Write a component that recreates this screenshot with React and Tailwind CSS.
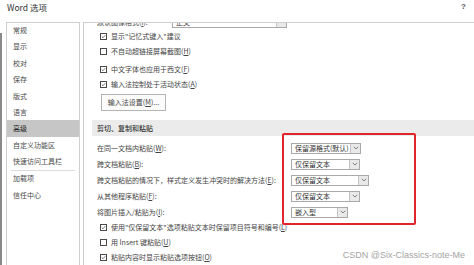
import React from "react";

const FONT = { fontFamily: '"Noto Sans CJK SC", "Noto Sans", sans-serif' };

function Key({ k }) {
  return (
    <>
      (<span className="underline">{k}</span>)
    </>
  );
}

function CheckBox({ checked }) {
  return (
    <span className="w-[7px] h-[7px] border border-[#4a4a4a] bg-white flex items-center justify-center shrink-0">
      {checked ? (
        <svg width="7" height="7" viewBox="0 0 7 7">
          <path d="M1 3.6 L2.8 5.2 L6 1.6" fill="none" stroke="#333" strokeWidth="0.9" />
        </svg>
      ) : null}
    </span>
  );
}

function CheckRow({ checked, children, h = "h-[15px]", extra = "" }) {
  return (
    <div className={`${h} ${extra} flex items-center pl-[16px] gap-[4px] text-[7px] text-[#444] whitespace-nowrap`}>
      <CheckBox checked={checked} />
      <span>{children}</span>
    </div>
  );
}

function Select({ value, w }) {
  return (
    <div className={`${w} h-[11px] border border-[#a9a9a9] bg-white flex items-stretch`}>
      <div className="flex-1 flex items-center pl-[3px] text-[7px] text-[#333] whitespace-nowrap overflow-hidden">
        {value}
      </div>
      <div className="w-[10px] border-l border-[#c4c4c4] bg-[#e9e9e9] flex items-center justify-center">
        <svg width="6" height="4" viewBox="0 0 6 4">
          <path d="M0.8 0.8 L3 3 L5.2 0.8" fill="none" stroke="#666" strokeWidth="0.8" />
        </svg>
      </div>
    </div>
  );
}

function PasteRow({ label, value, w }) {
  return (
    <div className="h-[16px] flex items-center pl-[13px] text-[7px] text-[#444] whitespace-nowrap">
      <div className="w-[194px] overflow-hidden">{label}</div>
      {value ? <Select value={value} w={w} /> : null}
    </div>
  );
}

const NAV = ["常规", "显示", "校对", "保存", "版式", "语言", "高级", "自定义功能区", "快速访问工具栏"];

export default function App() {
  return (
    <div className="relative w-[474px] h-[265px] overflow-hidden bg-white flex" style={FONT}>
      <div className="w-[2px] mt-[33px] bg-[#8a8a8a]" />
      <div className="flex-1 flex flex-col">
        <div className="h-[22px] flex items-start justify-between pl-[5px] pr-[8px] pt-[1px]">
          <span className="text-[8.5px] leading-[12px] text-[#333]">Word 选项</span>
          <span className="text-[8px] leading-[12px] text-[#555] font-bold" style={{ fontFamily: '"Liberation Sans", sans-serif' }}>?</span>
        </div>
        <div className="flex-1 flex pl-[4px] gap-[3px] min-h-0">
          <nav className="w-[74px] border-l border-t border-r border-[#cfcfcf] flex flex-col">
            <div className="-mt-[1px]">
              {NAV.map((n) => (
                <div
                  key={n}
                  className={`h-[16.4px] flex items-center pl-[6px] text-[7px] ${n === "高级" ? "bg-[#c6c6c6] text-[#222]" : "text-[#4a4a4a]"}`}
                >
                  {n}
                </div>
              ))}
              <div className="h-px bg-[#dcdcdc] mx-[4px]" />
              {["加载项", "信任中心"].map((n) => (
                <div key={n} className="h-[16.4px] flex items-center pl-[6px] text-[7px] text-[#4a4a4a]">
                  {n}
                </div>
              ))}
            </div>
          </nav>
          <section className="flex-1 border-l border-t border-[#cfcfcf] overflow-hidden flex flex-col">
            <div className="-mt-[8px] h-[14px] flex items-center pl-[13px] text-[7px] text-[#444] whitespace-nowrap">
              <span className="w-[75px]">默认图像格式(<span className="underline">I</span>):</span>
              <div className="w-[115px] h-[12px] border border-[#a9a9a9] flex">
                <span className="flex-1 pl-[3px] flex items-center">正文</span>
                <span className="w-[10px] border-l border-[#c4c4c4] bg-[#e9e9e9]" />
              </div>
            </div>
            <CheckRow checked>显示"记忆式键入"建议</CheckRow>
            <CheckRow>不自动超链接屏幕截图<Key k="H" /></CheckRow>
            <CheckRow checked extra="mt-[3px]">中文字体也应用于西文<Key k="F" /></CheckRow>
            <CheckRow checked>输入法控制处于活动状态<Key k="A" /></CheckRow>
            <div className="mt-[2px] pl-[17px]">
              <div className="w-[65px] h-[17px] border border-[#b4b4b4] bg-[#fbfbfb] flex items-center justify-center text-[7px] text-[#444]">
                输入法设置<Key k="M" />...
              </div>
            </div>
            <div className="mt-[9px] ml-[8px] h-[16px] bg-[#ebebeb] flex items-center pl-[5px] text-[7px] font-medium text-[#333]">
              剪切、复制和粘贴
            </div>
            <div className="mt-[4px]">
              <PasteRow label={<>在同一文档内粘贴<Key k="W" />:</>} value="保留源格式(默认)" w="w-[70px]" />
              <PasteRow label={<>跨文档粘贴<Key k="B" />:</>} value="仅保留文本" w="w-[69px]" />
              <PasteRow label={<>跨文档粘贴的情况下，样式定义发生冲突时的解决方法<Key k="E" />:</>} value="仅保留文本" w="w-[78px]" />
              <PasteRow label={<>从其他程序粘贴<Key k="F" />:</>} value="仅保留文本" w="w-[69px]" />
              <PasteRow label={<>将图片插入/粘贴为<Key k="I" />:</>} value="嵌入型" w="w-[57px]" />
            </div>
            <CheckRow checked>使用"仅保留文本"选项粘贴文本时保留项目符号和编号<Key k="L" /></CheckRow>
            <CheckRow>用 Insert 键粘贴<Key k="U" /></CheckRow>
            <CheckRow checked>粘贴内容时显示粘贴选项按钮<Key k="O" /></CheckRow>
          </section>
        </div>
      </div>
      <div className="absolute left-[282px] top-[133px] w-[134px] h-[92px] border-2 border-[#e0262a] rounded-[2px]" />
      <div
        className="absolute right-[9px] bottom-[3px] text-[9px] text-[#9a9a9a] opacity-90"
        style={{ fontFamily: '"Liberation Sans", "Noto Sans CJK SC", sans-serif' }}
      >
        CSDN @Six-Classics-note-Me
      </div>
    </div>
  );
}
